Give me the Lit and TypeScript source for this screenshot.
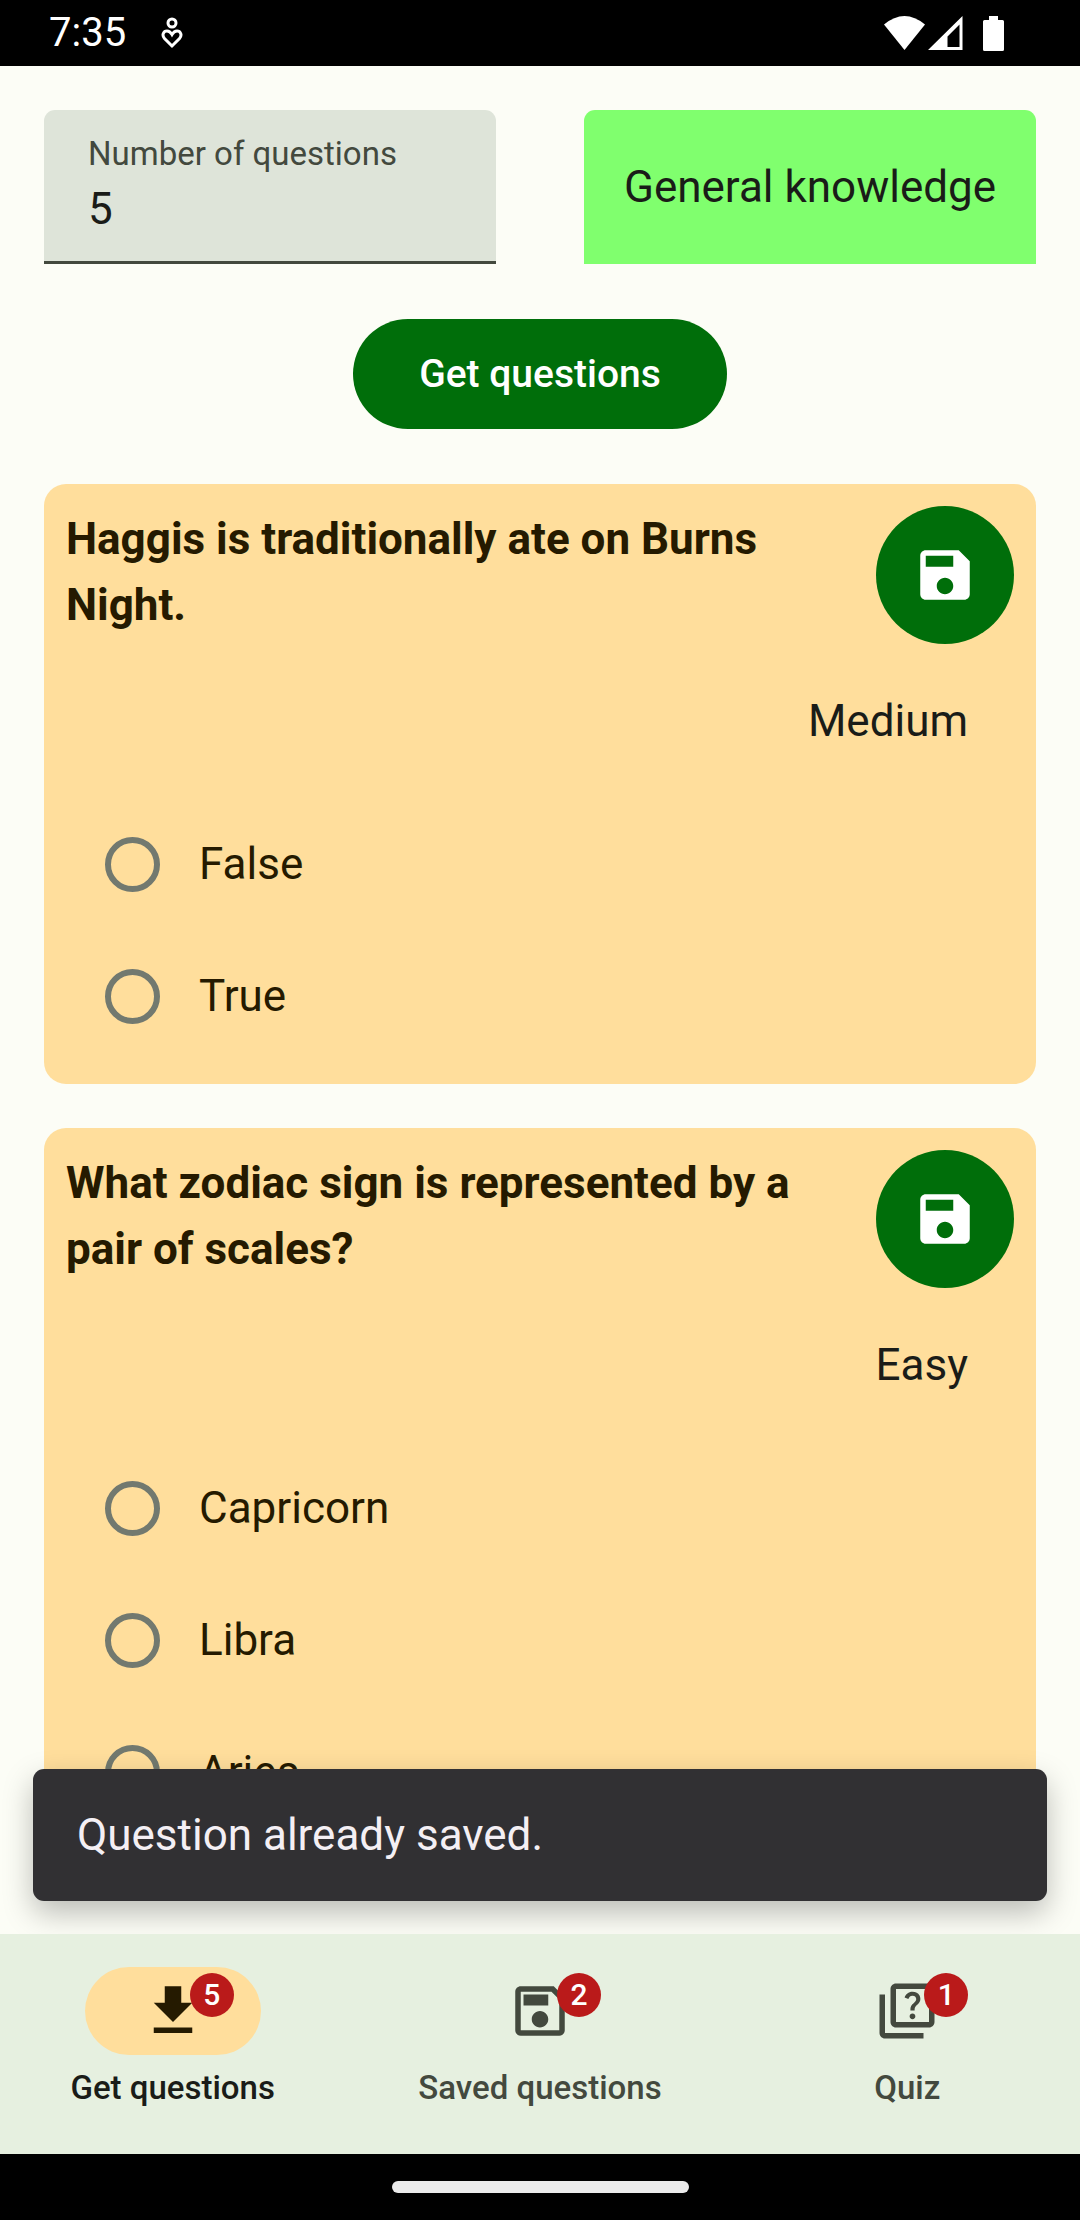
import { LitElement, html, css, svg } from "lit";
import { customElement, property, state } from "lit/decorators.js";

interface Question {
  id: string;
  text: string;
  difficulty: string;
  answers: string[];
}

const QUESTIONS: Question[] = [
  {
    id: "haggis",
    text: "Haggis is traditionally ate on Burns Night.",
    difficulty: "Medium",
    answers: ["False", "True"],
  },
  {
    id: "zodiac",
    text: "What zodiac sign is represented by a pair of scales?",
    difficulty: "Easy",
    answers: ["Capricorn", "Libra", "Aries"],
  },
];

const ICONS = {
  download: svg`<path d="M19 9h-4V3H9v6H5l7 7 7-7zM5 18v2h14v-2H5z"/>`,
  save: svg`<path d="M17 3H5c-1.11 0-2 .9-2 2v14c0 1.1.89 2 2 2h14c1.1 0 2-.9 2-2V7l-4-4zm-5 16c-1.66 0-3-1.34-3-3s1.34-3 3-3 3 1.34 3 3-1.34 3-3 3zm3-10H5V5h10v4z"/>`,
  saveOutline: svg`<path d="M17 3H5c-1.11 0-2 .9-2 2v14c0 1.1.89 2 2 2h14c1.1 0 2-.9 2-2V7l-4-4zm2 16H5V5h11.17L19 7.83V19zm-7-7c-1.66 0-3 1.34-3 3s1.34 3 3 3 3-1.34 3-3-1.34-3-3-3zM6 6h9v4H6V6z"/>`,
  quiz: svg`<path d="M4 6H2v14c0 1.1.9 2 2 2h14v-2H4V6zm16-4H8c-1.1 0-2 .9-2 2v12c0 1.1.9 2 2 2h12c1.1 0 2-.9 2-2V4c0-1.1-.9-2-2-2zm0 14H8V4h12v12zM13.51 10.16c.41-.73 1.18-1.16 1.63-1.8.48-.68.21-1.94-1.14-1.94-.88 0-1.32.67-1.5 1.23l-1.37-.57C11.51 5.96 12.52 5 13.99 5c1.23 0 2.08.56 2.51 1.26.37.6.58 1.73.01 2.57-.63.93-1.23 1.21-1.56 1.81-.13.24-.18.4-.18 1.18h-1.52c.01-.41-.06-1.08.26-1.66zm-.56 3.79c0-.59.47-1.04 1.05-1.04.59 0 1.04.45 1.04 1.04 0 .58-.44 1.05-1.04 1.05-.58 0-1.05-.47-1.05-1.05z"/>`,
};

@customElement("status-bar")
export class StatusBar extends LitElement {
  static styles = css`
    :host {
      display: flex;
      align-items: center;
      justify-content: space-between;
      height: 66px;
      flex: none;
      padding: 0 76px 0 49px;
      background: #000;
      color: #fff;
      font-size: 40px;
      line-height: 44px;
    }
    .group {
      display: flex;
      align-items: center;
    }
    .start {
      gap: 35px;
    }
    .end {
      gap: 3px;
    }
    .battery {
      margin-left: 17px;
    }
    svg {
      display: block;
    }
  `;

  render() {
    return html`
      <div class="group start">
        <span>7:35</span>
        <svg width="22" height="32" viewBox="0 0 22 32" fill="none" stroke="#fff" stroke-width="3" aria-hidden="true">
          <circle cx="11" cy="6" r="4" />
          <path d="M11 29 3.500 21.500C.500 18 2.500 14 6 14c2 0 3.500 1 5 3.500C12.500 15 14 14 16 14c3.500 0 5.500 4 2.500 7.500z" />
        </svg>
      </div>
      <div class="group end">
        <svg width="41" height="34" viewBox="0 0 41 34" fill="#fff" aria-hidden="true">
          <path d="M0 8.500Q20.500-8.500 41 8.500L20.500 34z" />
        </svg>
        <svg width="35" height="34" viewBox="0 0 35 34" fill="#fff" aria-hidden="true">
          <path fill-rule="evenodd" d="M34.500 0v34H0zM31.500 8.500 19.500 20.500V31h12z" />
        </svg>
        <svg class="battery" width="21" height="35" viewBox="0 0 21 35" fill="#fff" aria-hidden="true">
          <path d="M6 0h9v4h4.500Q21 4 21 5.500v28Q21 35 19.500 35h-18Q0 35 0 33.500v-28Q0 4 1.500 4H6z" />
        </svg>
      </div>
    `;
  }
}

@customElement("question-card")
export class QuestionCard extends LitElement {
  @property({ attribute: false }) question!: Question;

  static styles = css`
    :host {
      display: block;
      padding: 22px;
      border-radius: 22px;
      background: #ffde9c;
      color: #251a00;
      font-size: 44px;
      line-height: 66px;
    }
    .head {
      display: flex;
      align-items: flex-start;
      gap: 22px;
    }
    .text {
      flex: 1;
      margin: 0;
      font-size: inherit;
      font-weight: 700;
    }
    .save {
      display: grid;
      place-items: center;
      flex: none;
      width: 138px;
      height: 138px;
      padding: 0;
      border: 0;
      border-radius: 50%;
      background: #006e0a;
      color: #fff;
    }
    .save svg {
      width: 66px;
      height: 66px;
      fill: currentColor;
    }
    .difficulty {
      margin: 0;
      padding: 44px 46px;
      color: #1a1c18;
      text-align: right;
    }
    .answers {
      margin: 0;
      padding: 0;
      border: 0;
    }
    .answer {
      display: flex;
      align-items: center;
      gap: 39px;
      height: 132px;
      padding-left: 39px;
    }
    .radio {
      appearance: none;
      box-sizing: border-box;
      width: 55px;
      height: 55px;
      margin: 0;
      border: 6px solid #72796f;
      border-radius: 50%;
    }
    .radio:checked {
      border-color: #006e0a;
      background: radial-gradient(#006e0a 50%, transparent 52%);
    }
  `;

  render() {
    const q = this.question;
    return html`
      <div class="head">
        <h2 class="text" id="text">${q.text}</h2>
        <button class="save" type="button" aria-label="Save question">
          <svg viewBox="0 0 24 24" aria-hidden="true">${ICONS.save}</svg>
        </button>
      </div>
      <p class="difficulty">${q.difficulty}</p>
      <fieldset class="answers" aria-labelledby="text">
        ${q.answers.map(
          (answer, i) => html`
            <label class="answer" for="answer-${i}">
              <input class="radio" type="radio" id="answer-${i}" name=${q.id} value=${answer} />
              <span>${answer}</span>
            </label>
          `
        )}
      </fieldset>
    `;
  }
}

@customElement("nav-bar")
export class NavBar extends LitElement {
  @state() private active = 0;

  private items = [
    { label: "Get questions", icon: ICONS.download, count: 5 },
    { label: "Saved questions", icon: ICONS.saveOutline, count: 2 },
    { label: "Quiz", icon: ICONS.quiz, count: 1 },
  ];

  static styles = css`
    :host {
      display: block;
      flex: none;
      background: #e6f0e0;
    }
    .items {
      display: grid;
      grid-template-columns: repeat(3, 1fr);
      gap: 22px;
    }
    .item {
      display: flex;
      flex-direction: column;
      align-items: center;
      gap: 11px;
      padding: 33px 0 44px;
      border: 0;
      background: none;
      color: #43493e;
      font: 500 33px/44px Roboto, "Liberation Sans", sans-serif;
      white-space: nowrap;
    }
    .item[aria-current="page"] {
      color: #1a1c18;
    }
    .indicator {
      display: grid;
      place-items: center;
      width: 176px;
      height: 88px;
      border-radius: 44px;
    }
    .item[aria-current="page"] .indicator {
      background: #ffde9c;
      color: #251a00;
    }
    .icon {
      position: relative;
      width: 66px;
      height: 66px;
    }
    .icon svg {
      display: block;
      fill: currentColor;
    }
    .badge {
      position: absolute;
      top: -5px;
      left: 50px;
      min-width: 44px;
      border-radius: 22px;
      background: #ba1a1a;
      color: #fff;
      font-size: 30px;
      line-height: 44px;
      text-align: center;
    }
  `;

  render() {
    return html`
      <nav class="items">
        ${this.items.map(
          (item, i) => html`
            <button
              class="item"
              type="button"
              aria-current=${this.active === i ? "page" : "false"}
              @click=${() => (this.active = i)}
            >
              <span class="indicator">
                <span class="icon">
                  <svg viewBox="0 0 24 24" aria-hidden="true">${item.icon}</svg>
                  <span class="badge">${item.count}</span>
                </span>
              </span>
              <span>${item.label}</span>
            </button>
          `
        )}
      </nav>
    `;
  }
}

@customElement("app-root")
export class AppRoot extends LitElement {
  static styles = css`
    :host {
      display: flex;
      flex-direction: column;
      height: 100vh;
      background: #fcfdf6;
      color: #1a1c18;
      font-family: Roboto, "Liberation Sans", sans-serif;
      font-size: 44px;
      line-height: 66px;
    }
    .screen {
      position: relative;
      flex: 1;
      min-height: 0;
      overflow: hidden;
    }
    .scroll {
      box-sizing: border-box;
      height: 100%;
      padding: 44px;
      overflow-y: auto;
      scrollbar-width: none;
    }
    .fields {
      display: grid;
      grid-template-columns: 1fr 1fr;
      gap: 88px;
    }
    .field {
      display: flex;
      flex-direction: column;
      padding: 22px 44px 19px;
      border-bottom: 3px solid #43493e;
      border-radius: 11px 11px 0 0;
      background: #dee4d9;
    }
    .label {
      color: #43493e;
      font-size: 33px;
      line-height: 44px;
      white-space: nowrap;
    }
    .number {
      width: 100%;
      height: 66px;
      padding: 0;
      border: 0;
      outline: 0;
      background: none;
      color: inherit;
      font: inherit;
    }
    .category {
      appearance: none;
      width: 100%;
      min-width: 0;
      padding: 0;
      border: 0;
      border-radius: 11px 11px 0 0;
      background: #80ff6e;
      color: inherit;
      font: inherit;
      text-align: center;
      text-align-last: center;
    }
    .actions {
      display: flex;
      justify-content: center;
      padding: 55px 0;
    }
    .fetch {
      height: 110px;
      padding: 0 66px;
      border: 0;
      border-radius: 55px;
      background: #006e0a;
      color: #fff;
      font: 500 39px/55px Roboto, "Liberation Sans", sans-serif;
    }
    .list {
      display: flex;
      flex-direction: column;
      gap: 44px;
    }
    .snackbar {
      position: absolute;
      right: 33px;
      bottom: 33px;
      left: 33px;
      padding: 33px 44px;
      border-radius: 11px;
      background: #313033;
      box-shadow: 0 12px 30px rgba(0, 0, 0, 0.26);
      color: #f4eff4;
    }
    .gesture {
      display: grid;
      place-items: center;
      flex: none;
      height: 66px;
      background: #000;
    }
    .handle {
      width: 297px;
      height: 12px;
      border-radius: 6px;
      background: #ebebeb;
    }
  `;

  render() {
    return html`
      <status-bar></status-bar>
      <main class="screen">
        <div class="scroll">
          <div class="fields">
            <div class="field">
              <label class="label" for="count">Number of questions</label>
              <input class="number" id="count" type="text" inputmode="numeric" value="5" />
            </div>
            <select class="category" aria-label="Category">
              <option>General knowledge</option>
            </select>
          </div>
          <div class="actions">
            <button class="fetch" type="button">Get questions</button>
          </div>
          <div class="list">
            ${QUESTIONS.map((q) => html`<question-card .question=${q}></question-card>`)}
          </div>
        </div>
        <div class="snackbar" role="status">Question already saved.</div>
      </main>
      <nav-bar></nav-bar>
      <div class="gesture"><div class="handle"></div></div>
    `;
  }
}
